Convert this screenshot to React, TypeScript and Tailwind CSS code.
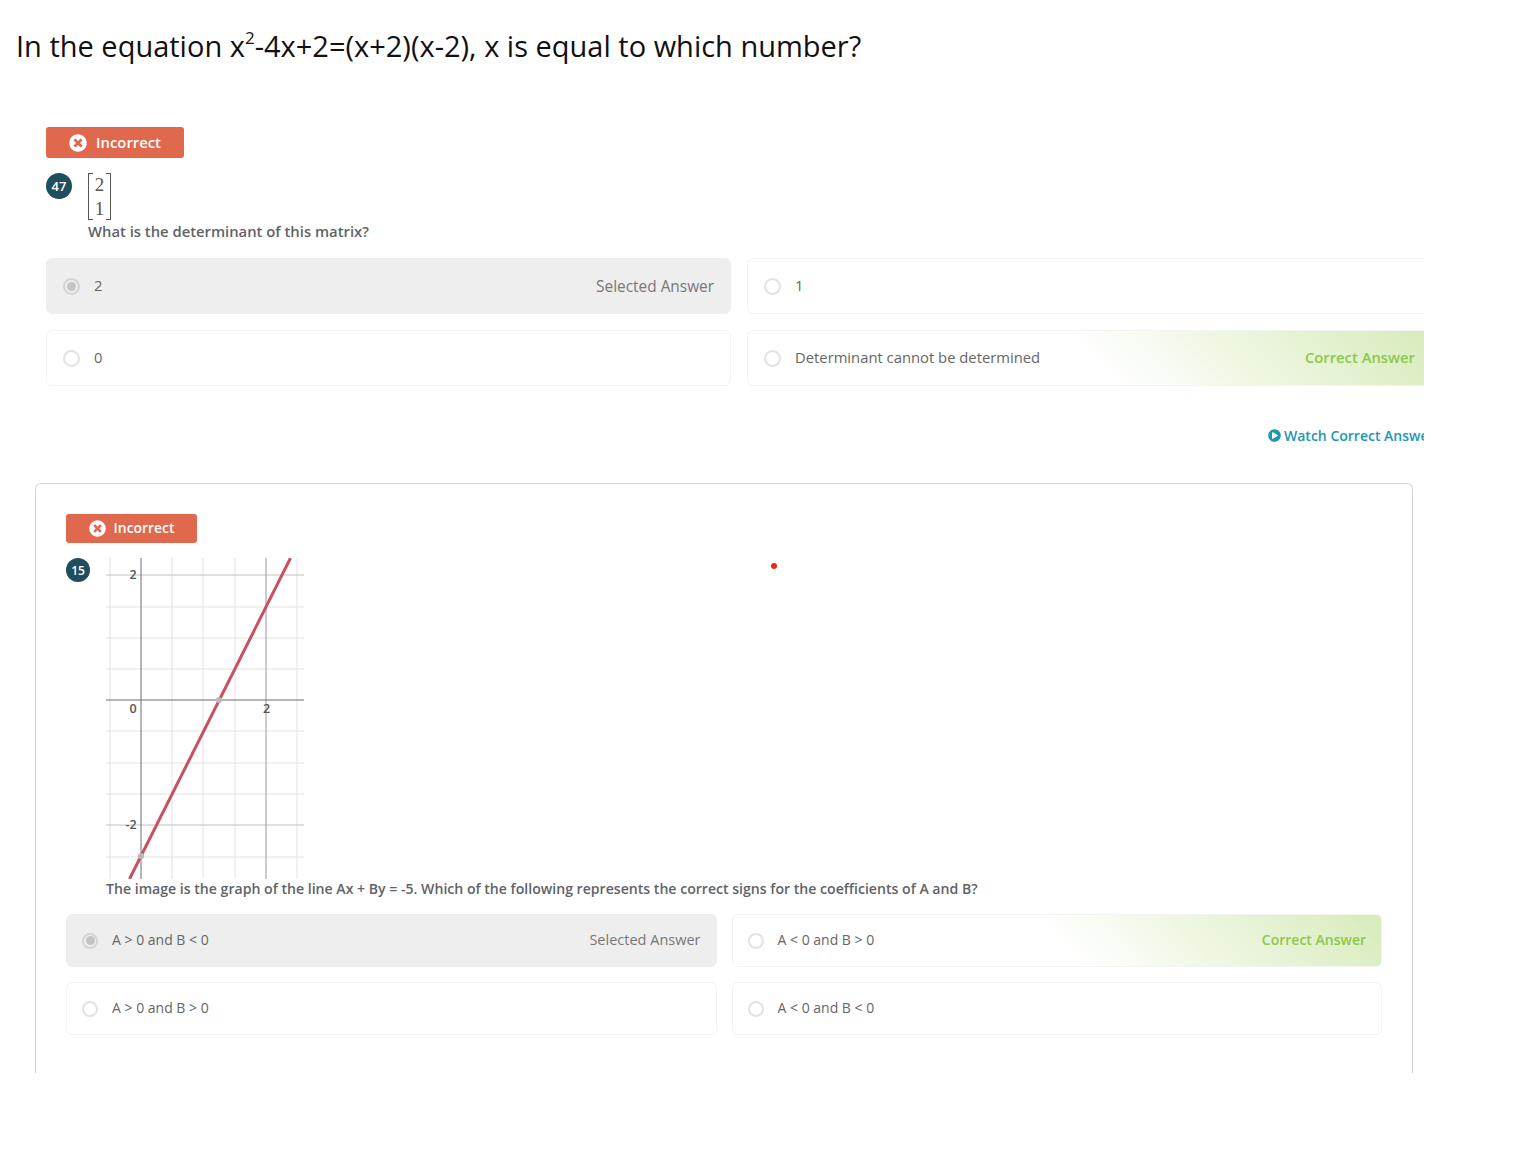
import { FaPlayCircle, FaTimesCircle } from "react-icons/fa";

type OptionProps = {
  text: string;
  state?: "selected" | "correct";
  large?: boolean;
};

function Option({ text, state, large }: OptionProps) {
  const box = large ? "h-14 px-4 text-[14.8px]" : "h-[53px] pl-[15px] pr-[15px] text-[14px]";
  const look =
    state === "selected"
      ? "bg-[#eeeeee] border-[#eeeeee]"
      : state === "correct"
        ? "border-[#f3f3f3] bg-[linear-gradient(45deg,#ffffff_50%,#d7ebba_100%)]"
        : "border-[#f3f3f3] bg-white";

  return (
    <div className={`flex items-center rounded-md border ${box} ${look}`}>
      <span
        className={`flex shrink-0 items-center justify-center rounded-full border-2 ${large ? "h-[17px] w-[17px]" : "h-4 w-4"} ${
          state === "selected" ? "border-[#d4d4d4]" : "border-[#e2e2e2]"
        }`}
      >
        {state === "selected" && <span className="h-[9px] w-[9px] rounded-full bg-[#c4c4c4]" />}
      </span>
      <span className="mb-[2px] ml-[14px] leading-[19px] text-[#666666]">{text}</span>
      {state === "selected" && (
        <span className={`ml-auto leading-5 text-[#777777] ${large ? "mt-[2px] text-[15.4px]" : "mb-[2px] text-[14.5px]"}`}>
          Selected Answer
        </span>
      )}
      {state === "correct" && <span className="mb-[2px] ml-auto font-semibold leading-[19px] text-[#8cc84b]">Correct Answer</span>}
    </div>
  );
}

function Badge({ small }: { small?: boolean }) {
  return (
    <div
      className={`flex items-center justify-center rounded-[3px] bg-[#e0684d] font-semibold text-white ${
        small ? "h-[29px] w-[131px] gap-2 text-[13.9px]" : "h-[31px] w-[138px] gap-[9px] text-[14.8px]"
      }`}
    >
      <FaTimesCircle size={small ? 17 : 18} />
      Incorrect
    </div>
  );
}

function Num({ value, small }: { value: number; small?: boolean }) {
  return (
    <div
      className={`flex shrink-0 items-center justify-center rounded-full bg-[#1f4e5f] pt-px font-semibold text-white ${
        small ? "h-6 w-6 text-[12px]" : "h-[26px] w-[26px] text-[13px]"
      }`}
    >
      {value}
    </div>
  );
}

function Graph() {
  const verticals = [4, 66, 97, 129, 191];
  const horizontals = [49, 80, 111, 173, 205, 236, 299];
  return (
    <svg width="198" height="321" viewBox="0 0 198 321" className="block">
      {verticals.map((x) => (
        <line key={x} x1={x} y1="0" x2={x} y2="321" stroke="#e2e2e4" strokeWidth="1" />
      ))}
      {horizontals.map((y) => (
        <line key={y} x1="0" y1={y} x2="198" y2={y} stroke="#e2e2e4" strokeWidth="1" />
      ))}
      <line x1="0" y1="17" x2="198" y2="17" stroke="#c0c0c4" strokeWidth="1" />
      <line x1="0" y1="267" x2="198" y2="267" stroke="#c0c0c4" strokeWidth="1" />
      <line x1="160" y1="0" x2="160" y2="321" stroke="#98989c" strokeWidth="1" />
      <line x1="35" y1="0" x2="35" y2="321" stroke="#6c6c70" strokeWidth="1" />
      <line x1="0" y1="142" x2="198" y2="142" stroke="#6c6c70" strokeWidth="1" />
      <line x1="184.5" y1="0" x2="23.5" y2="321" stroke="#c9505f" strokeWidth="3" />
      <circle cx="113" cy="142" r="3" fill="#b8b8b8" />
      <circle cx="35" cy="298" r="3" fill="#b8b8b8" />
      <g fontFamily="Open Sans, sans-serif" fontSize="12.5" fontWeight="600" fill="#555555">
        <text x="23.5" y="21">2</text>
        <text x="23.5" y="155">0</text>
        <text x="157" y="155">2</text>
        <text x="19.5" y="271">-2</text>
      </g>
    </svg>
  );
}

export default function App() {
  return (
    <div className="min-h-[1152px] bg-white font-['Open_Sans',sans-serif]">
      <h1 className="pl-4 pt-[26px] text-[29px] leading-10 text-[#111111]">
        In the equation x<sup className="top-[-13px] text-[17px]">2</sup>-4x+2=(x+2)(x-2), x is equal to which number?
      </h1>

      <div className="ml-[46px] mt-[61px] w-[1378px] overflow-hidden">
        <Badge />
        <div className="mt-[15px] flex">
          <Num value={47} />
          <div className="ml-4">
            <div className="flex h-[47px] w-[23px] items-stretch justify-between">
              <span className="w-[5px] border-y border-l border-[#555555]" />
              <span className="flex flex-col items-center justify-center font-['Liberation_Serif',serif] text-[19px] leading-[24px] text-[#555555]">
                <span>2</span>
                <span>1</span>
              </span>
              <span className="w-[5px] border-y border-r border-[#555555]" />
            </div>
            <p className="mt-px text-[14.8px] font-semibold leading-[20px] text-[#5f6368]">
              What is the determinant of this matrix?
            </p>
          </div>
        </div>

        <div className="mt-[17px] grid w-[1386px] grid-cols-2 gap-x-4 gap-y-4">
          <Option large text="2" state="selected" />
          <Option large text="1" />
          <Option large text="0" />
          <Option large text="Determinant cannot be determined" state="correct" />
        </div>

        <div className="mt-[39px] flex justify-end whitespace-nowrap">
          <div className="flex w-[156px] shrink-0 items-center gap-[3px] overflow-hidden text-[14px] font-semibold text-[#2196b4]">
            <FaPlayCircle size={13} className="shrink-0" />
            <span>Watch Correct Answer</span>
          </div>
        </div>
      </div>

      <div className="relative ml-[35px] mt-[37px] h-[590px] w-[1378px] rounded-t-md border-x border-t border-[#d4d4d4] px-[30px] pt-[30px]">
        <span className="absolute left-[735px] top-[79px] h-[6px] w-[6px] rounded-full bg-[#e8261f]" />
        <Badge small />
        <div className="mt-[15px] flex">
          <Num value={15} small />
          <div className="ml-4">
            <Graph />
            <p className="text-[14.1px] font-semibold leading-5 text-[#5f6368]">
              The image is the graph of the line Ax + By = -5. Which of the following represents the correct signs for the
              coefficients of A and B?
            </p>
          </div>
        </div>
        <div className="mt-[15px] grid grid-cols-2 gap-x-[15px] gap-y-[15px]">
          <Option text="A > 0 and B < 0" state="selected" />
          <Option text="A < 0 and B > 0" state="correct" />
          <Option text="A > 0 and B > 0" />
          <Option text="A < 0 and B < 0" />
        </div>
      </div>
    </div>
  );
}
